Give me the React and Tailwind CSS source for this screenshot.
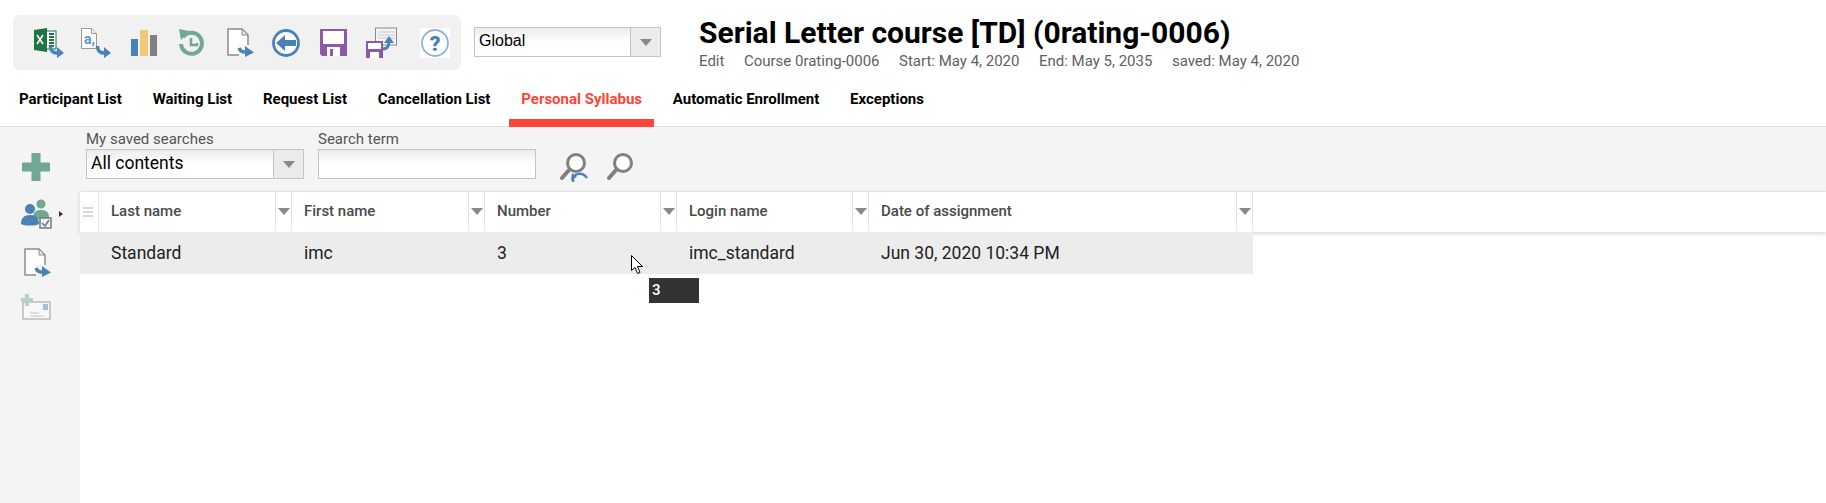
const tabs = ['Participant List', 'Waiting List', 'Request List', 'Cancellation List', 'Personal Syllabus', 'Automatic Enrollment', 'Exceptions'];
const columns = [
  { label: 'Last name', value: 'Standard', width: 'w-[193px]' },
  { label: 'First name', value: 'imc', width: 'w-[193px]' },
  { label: 'Number', value: '3', width: 'w-[192px]' },
  { label: 'Login name', value: 'imc_standard', width: 'w-[192px]' },
  { label: 'Date of assignment', value: 'Jun 30, 2020 10:34 PM', width: 'w-[384px]' },
];

function CurveArrow({ x = 0, y = 0 }) {
  return (
    <g transform={`translate(${x} ${y})`}>
      <path d="M1.500 0c0 5 3 7.500 8 7" fill="none" stroke="#4a82b8" strokeWidth="3.500" />
      <path d="M8 1l7 6-7 5z" fill="#4a82b8" />
    </g>
  );
}

function ExcelIcon() {
  return (
    <svg width="30" height="30" viewBox="0 0 30 30" className="shrink-0">
      <rect x="10" y="3" width="12" height="18" fill="#fff" stroke="#217346" />
      <path d="M15 6h5M15 9h5M15 12h5M15 15h5M15 18h5" stroke="#217346" strokeWidth="2" />
      <path d="M0 2l13-2v24L0 22z" fill="#217346" />
      <path d="M3 7l6 9M9 7l-6 9" stroke="#fff" strokeWidth="1.6" />
      <CurveArrow x={15} y={18} />
    </svg>
  );
}

function TranslateDocIcon() {
  return (
    <svg width="30" height="30" viewBox="0 0 30 30" className="shrink-0">
      <path d="M.5.5h10l5 5v15H.5z" fill="#fff" stroke="#999" />
      <path d="M10.500.5v5h5" fill="#eee" stroke="#999" />
      <text x="3" y="16" fontFamily="Roboto, sans-serif" fontSize="14" fontWeight="700" fill="#5c93c9">a,</text>
      <CurveArrow x={15} y={18} />
    </svg>
  );
}

function BarsIcon() {
  return (
    <svg width="26" height="26" viewBox="0 0 26 26" className="shrink-0">
      <rect x="0" y="9" width="7" height="17" fill="#4a82b8" />
      <rect x="9" y="0" width="8" height="26" fill="#f0c878" />
      <rect x="19" y="5" width="7" height="21" fill="#808080" />
    </svg>
  );
}

function HistoryIcon() {
  return (
    <svg width="27" height="28" viewBox="0 0 27 28" className="shrink-0">
      <path d="M5 8a10.500 10.500 0 1 1-2 7" fill="none" stroke="#70a892" strokeWidth="4" />
      <path d="M1 0l10 2-8 9z" fill="#70a892" />
      <path d="M13 9v7h6v-2" fill="none" stroke="#70a892" strokeWidth="2.500" />
    </svg>
  );
}

function DocArrowIcon() {
  return (
    <svg width="27" height="29" viewBox="0 0 27 29" className="shrink-0">
      <path d="M1 1h14l6 6v20H1z" fill="#fff" stroke="#8c8c8c" strokeWidth="1.500" />
      <path d="M15 1v6h6z" fill="#e4e4e4" stroke="#8c8c8c" />
      <rect x="12" y="17" width="15" height="12" fill="#f3f3f3" />
      <path d="M12 20c1 3 4 4.500 8 4" fill="none" stroke="#4a82b8" strokeWidth="3.500" />
      <path d="M18 18l9 6.500-9 4.500z" fill="#4a82b8" />
    </svg>
  );
}

function BackIcon() {
  return (
    <svg width="28" height="28" viewBox="0 0 28 28" className="shrink-0">
      <circle cx="14" cy="14" r="12.500" fill="#fff" stroke="#4a82b8" strokeWidth="2.800" />
      <path d="M4 14l9-8v5h11v6H13v5z" fill="#4a82b8" />
    </svg>
  );
}

function SaveIcon() {
  return (
    <svg width="27" height="27" viewBox="0 0 27 27" className="shrink-0">
      <path d="M0 0h27v27H2l-2-2z" fill="#8d5aa8" />
      <rect x="3" y="2" width="21" height="13" fill="#fff" />
      <rect x="7" y="18" width="13" height="9" fill="#fff" />
      <rect x="10" y="20" width="3" height="7" fill="#8d5aa8" />
    </svg>
  );
}

function SaveMultiIcon() {
  return (
    <svg width="31" height="31" viewBox="0 0 31 31" className="shrink-0">
      <rect x="9.500" y="1" width="21" height="17" fill="#f4f4f4" stroke="#8c8c8c" />
      <path d="M12 5h17M12 8h17M12 11h17" stroke="#c8c8c8" />
      <rect x="0" y="14" width="17" height="17" fill="#8d5aa8" />
      <rect x="2" y="16" width="13" height="6" fill="#fff" />
      <rect x="4" y="25" width="9" height="6" fill="#fff" />
      <path d="M17 22c4 0 6-3 6-8" fill="none" stroke="#4a82b8" strokeWidth="3" />
      <path d="M18 16l5-7 5 7z" fill="#4a82b8" />
    </svg>
  );
}

function HelpIcon() {
  return (
    <svg width="30" height="30" viewBox="0 0 30 30" className="shrink-0 bg-white">
      <circle cx="15" cy="15" r="13" fill="#fff" stroke="#8fb2d6" strokeWidth="1.800" />
      <text x="15" y="22.500" textAnchor="middle" fontFamily="Roboto, sans-serif" fontWeight="900" fontSize="21" fill="#4a7fb5">?</text>
    </svg>
  );
}

function PlusIcon() {
  return (
    <svg width="28" height="28" viewBox="0 0 28 28">
      <path d="M9.500 0h9v9.500H28v9h-9.500V28h-9v-9.500H0v-9h9.500z" fill="#70a892" />
    </svg>
  );
}

function UsersIcon() {
  return (
    <svg width="31" height="30" viewBox="0 0 31 30">
      <circle cx="20" cy="5" r="4.500" fill="#70a892" />
      <path d="M12 19c0-6 3-8 8-8s8 2 8 7v2H12z" fill="#70a892" />
      <circle cx="9" cy="10" r="5" fill="#4a82b8" />
      <path d="M0 25c0-6 3-9 9-9s9 3 9 9c-4 2-14 2-18 0z" fill="#4a82b8" />
      <rect x="19" y="19" width="11" height="10" fill="#f3f3f3" stroke="#777" strokeWidth="1.500" />
      <path d="M21 24l3 3 4-6" fill="none" stroke="#4a82b8" strokeWidth="1.500" />
    </svg>
  );
}

function EnvelopeIcon() {
  return (
    <svg width="30" height="26" viewBox="0 0 30 26">
      <rect x="2" y="8" width="27" height="17" fill="#f8f8f8" stroke="#bbb" strokeWidth="1.500" />
      <rect x="22" y="10" width="5" height="6" fill="#a5bfdb" />
      <path d="M9 19h9M9 22h14" stroke="#c4c4c4" />
      <path d="M4 0h4v4h4v4H8v4H4V8H0V4h4z" fill="#b5d2c6" />
    </svg>
  );
}

function SearchResetIcon() {
  return (
    <svg width="29" height="30" viewBox="0 0 29 30">
      <circle cx="16" cy="10" r="8.500" fill="#fff" stroke="#808080" strokeWidth="3" />
      <path d="M9 17l-7 8" stroke="#808080" strokeWidth="4" strokeLinecap="round" />
      <path d="M13 29v-4c2-5 10-6 14 0" fill="none" stroke="#4a82b8" strokeWidth="2.500" />
      <path d="M12 20l5 4-6 3z" fill="#4a82b8" />
    </svg>
  );
}

function SearchIcon() {
  return (
    <svg width="27" height="27" viewBox="0 0 27 27">
      <circle cx="16" cy="10" r="8.500" fill="#fff" stroke="#808080" strokeWidth="3" />
      <path d="M9 17l-7 8" stroke="#808080" strokeWidth="4" strokeLinecap="round" />
    </svg>
  );
}

function Caret({ className = '' }) {
  return <span className={`w-0 h-0 border-x-[6px] border-x-transparent border-t-[7px] border-t-[#888] ${className}`} />;
}

function ComboBox({ label, width, textSize }) {
  return (
    <div className={`flex h-[30px] ${width} border border-[#c4c4c4] bg-gradient-to-b from-[#ececec] via-white to-white`}>
      <span className={`flex-1 pl-1 leading-[26px] text-black ${textSize}`}>{label}</span>
      <span className="flex w-[30px] items-center justify-center border-l border-[#c4c4c4] bg-[#ebebeb]">
        <Caret />
      </span>
    </div>
  );
}

export default function App() {
  return (
    <div className="relative flex h-screen flex-col overflow-hidden bg-white font-['Roboto',sans-serif]">
      <div className="flex h-[90px] shrink-0 items-start pl-[13px]">
        <div className="mt-[15px] flex h-[55px] w-[448px] items-center rounded-md bg-[#f1f1f1] pl-[21px]">
          <ExcelIcon />
          <span className="ml-[17px]"><TranslateDocIcon /></span>
          <span className="ml-[20px]"><BarsIcon /></span>
          <span className="ml-[21px]"><HistoryIcon /></span>
          <span className="ml-[22px]"><DocArrowIcon /></span>
          <span className="ml-[18px]"><BackIcon /></span>
          <span className="ml-[20px]"><SaveIcon /></span>
          <span className="ml-[19px]"><SaveMultiIcon /></span>
          <span className="ml-[23px]"><HelpIcon /></span>
        </div>
        <div className="ml-[13px] mt-[27px]">
          <ComboBox label="Global" width="w-[187px]" textSize="text-base font-['Liberation_Sans',sans-serif]" />
        </div>
        <div className="ml-[38px] mt-[15px]">
          <h1 className="text-[30px] font-bold leading-[36px] text-black">Serial Letter course [TD] (0rating-0006)</h1>
          <div className="mt-[2px] flex gap-[19.5px] text-[15px] leading-[17px] text-[#5f5f5f]">
            <span>Edit</span>
            <span>Course 0rating-0006</span>
            <span>Start: May 4, 2020</span>
            <span>End: May 5, 2035</span>
            <span>saved: May 4, 2020</span>
          </div>
        </div>
      </div>

      <div className="flex h-[37px] shrink-0 gap-[6.8px] border-b border-[#dedede] pl-[7px]">
        {tabs.map((tab) => (
          <div
            key={tab}
            className={
              tab === 'Personal Syllabus'
                ? 'h-[37px] border-b-[8px] border-[#ff4438] px-3 text-[15px] font-bold leading-[18px] text-[#ff4438]'
                : 'h-[36px] px-3 text-[15px] font-bold leading-[18px] text-black'
            }
          >
            {tab}
          </div>
        ))}
      </div>

      <div className="flex flex-1">
        <div className="flex w-[80px] shrink-0 flex-col bg-[#f4f4f4] pl-[21px]">
          <span className="ml-[1px] mt-[26px]"><PlusIcon /></span>
          <div className="mt-[18px] flex items-center">
            <UsersIcon />
            <span className="ml-[7px] h-0 w-0 border-y-[3px] border-l-[4px] border-y-transparent border-l-[#333]" />
          </div>
          <span className="ml-[3px] mt-[19px]"><DocArrowIcon /></span>
          <span className="mt-[17px]"><EnvelopeIcon /></span>
        </div>

        <div className="flex-1">
          <div className="flex h-[64px] bg-[#f4f4f4] pl-[6px]">
            <div className="w-[218px]">
              <div className="pt-[3px] text-[15px] leading-[19px] text-[#555]">My saved searches</div>
              <ComboBox label="All contents" width="w-[218px]" textSize="text-[17.5px]" />
            </div>
            <div className="ml-[14px] w-[218px]">
              <div className="pt-[3px] text-[15px] leading-[19px] text-[#555]">Search term</div>
              <div className="h-[30px] border border-[#c4c4c4] bg-gradient-to-b from-[#ececec] via-white to-white" />
            </div>
            <span className="ml-[24px] mt-[26px]"><SearchResetIcon /></span>
            <span className="ml-[18px] mt-[26px]"><SearchIcon /></span>
          </div>

          <div className="flex h-[41px] border-t border-[#e4e4e4] bg-white shadow-[0_2px_4px_rgba(0,0,0,0.15)]">
            <div className="flex w-[19px] flex-col items-center justify-center gap-[2px] border-r border-[#e4e4e4] pr-[3px]">
              <span className="h-[2px] w-[10px] bg-[#d8d8d8]" />
              <span className="h-[2px] w-[10px] bg-[#d8d8d8]" />
              <span className="h-[2px] w-[10px] bg-[#d8d8d8]" />
            </div>
            {columns.map((col) => (
              <div key={col.label} className={`flex ${col.width}`}>
                <span className="flex-1 pl-3 text-[15px] font-medium leading-[38px] text-[#4a4a4a]">{col.label}</span>
                <span className="flex h-[39px] w-[17px] items-center justify-center border-x border-[#e4e4e4]">
                  <Caret />
                </span>
              </div>
            ))}
          </div>

          <div className="flex h-[42px] w-[1173px] items-center bg-[#ececec] pl-[19px] text-[17.5px] text-[#222]">
            {columns.map((col) => (
              <span key={col.label} className={`${col.width} pl-3`}>{col.value}</span>
            ))}
          </div>
        </div>
      </div>

      {/* mouse pointer and hover tooltip */}
      <svg className="absolute left-[631px] top-[255px]" width="13" height="20" viewBox="0 0 13 20">
        <path d="M.5.500v15l3.500-3 2.500 6 2.500-1-2.500-6h5z" fill="#fff" stroke="#000" />
      </svg>
      <div className="absolute left-[649px] top-[278px] h-[25px] w-[50px] bg-[#333] pl-[3px] text-[15px] font-medium leading-[25px] text-white">3</div>
    </div>
  );
}
